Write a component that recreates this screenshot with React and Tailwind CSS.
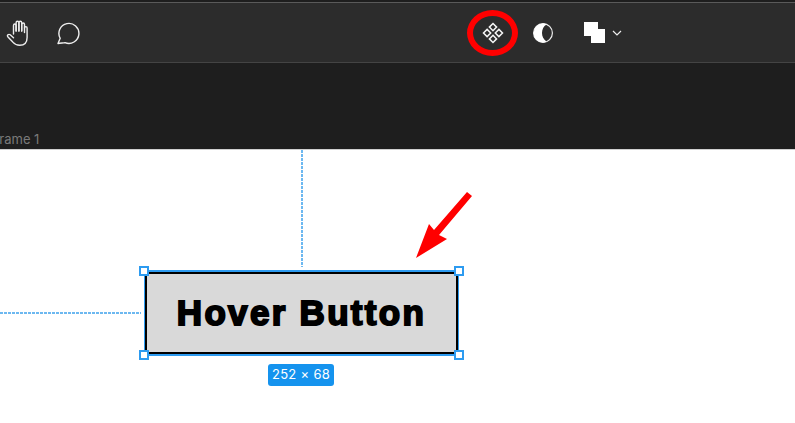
import React from 'react';

const HandIcon = () => (
  <svg width="26" height="28" viewBox="0 0 26 28" fill="none" stroke="#eeeeee" strokeWidth="1.4" strokeLinecap="round" strokeLinejoin="round">
    <path d="M7.5 15V6.5c0-2 2.6-2 2.6 0V12" />
    <path d="M10.1 12V3.8c0-2 2.8-2 2.8 0V12" />
    <path d="M12.9 12V3.8c0-2 2.8-2 2.8 0V12" />
    <path d="M15.7 12V5.5c0-2 2.8-2 2.8 0v8" />
    <path d="M18.5 9c0-1.8 2.6-1.8 2.6 0v9.5c0 5-3 7.8-7.5 7.8-3.2 0-5-1.2-6.8-3.2L2 18c-1.4-1.6.5-3.4 2.2-2.2l3.3 3" />
  </svg>
);

const CommentIcon = () => (
  <svg width="24" height="24" viewBox="0 0 24 24" fill="none" stroke="#eeeeee" strokeWidth="1.4" strokeLinejoin="round">
    <path d="M2 22.5l2.2-5.2A10 10 0 1 1 9 21.6c-1.8.3-4.500.5-7 .9z" />
  </svg>
);

const ComponentsIcon = () => (
  <svg width="22" height="22" viewBox="0 0 22 22" fill="none" stroke="#f4f4f4" strokeWidth="1.5">
    <path d="M11 1.500l3.600 3.600L11 8.700 7.400 5.100z" />
    <path d="M5.100 7.400l3.600 3.600-3.600 3.600L1.500 11z" />
    <path d="M16.900 7.400l3.600 3.600-3.600 3.600L13.300 11z" />
    <path d="M11 13.300l3.600 3.600L11 20.500l-3.600-3.600z" />
  </svg>
);

const ContrastIcon = () => (
  <svg width="22" height="22" viewBox="0 0 22 22">
    <circle cx="11" cy="11" r="9.400" fill="none" stroke="#eeeeee" strokeWidth="1.2" />
    <path d="M11 1.600a9.400 9.400 0 0 0 0 18.800c2 0 3-.6 3.500-1-3-1.800-4.500-5-4.500-8.400s1.500-6.600 4.500-8.400c-.5-.4-1.500-1-3.500-1z" fill="#ffffff" />
  </svg>
);

const Handle = ({ className }) => (
  <div className={`absolute w-[10px] h-[10px] bg-white border-2 border-[#2d9bf0] ${className}`} />
);

const App = () => {
  return (
    <div className="flex flex-col w-[795px] h-[423px] overflow-hidden bg-white font-['Liberation_Sans',Arial,sans-serif]">
      <div className="h-[2px] bg-[#1e1e1e]" />
      <header className="flex items-center h-[61px] bg-[#2c2c2c] border-t border-b border-t-[#5a5a5a] border-b-[#444444]">
        <div className="ml-[6px] flex items-center gap-[24px]">
          <HandIcon />
          <CommentIcon />
        </div>
        <div className="ml-[387px] relative flex items-center justify-center w-[51px] h-[46px]">
          <ComponentsIcon />
          <div className="absolute inset-0 rounded-[50%] border-[6px] border-[#ff0000]" />
        </div>
        <div className="ml-[14px]">
          <ContrastIcon />
        </div>
        <div className="ml-[30px] relative w-[21px] h-[21px]">
          <div className="absolute left-0 top-0 w-[14px] h-[14px] bg-white" />
          <div className="absolute left-[7px] top-[7px] w-[14px] h-[14px] bg-white" />
        </div>
        <svg className="ml-[7px]" width="10" height="6" viewBox="0 0 10 6" fill="none" stroke="#eeeeee" strokeWidth="1.200">
          <path d="M1 1l4 4 4-4" />
        </svg>
      </header>
      <div className="relative h-[86px] bg-[#1e1e1e]">
        <span className="absolute left-[-8px] bottom-0 text-[13px] text-[#7a7a7a] font-['Inter',sans-serif]">Frame 1</span>
      </div>
      <main className="relative flex-1 bg-white border-t border-t-[#d0d0d0]">
        <div className="absolute left-[301px] top-0 w-[2px] h-[117px] bg-[repeating-linear-gradient(to_bottom,#6db8f0_0,#6db8f0_3px,transparent_3px,transparent_4px)]" />
        <div className="absolute left-0 top-[162px] w-[141px] h-[2px] bg-[repeating-linear-gradient(to_right,#6db8f0_0,#6db8f0_3px,transparent_3px,transparent_4px)]" />

        <svg className="absolute left-[414px] top-[40px]" width="60" height="72" viewBox="0 0 60 72">
          <path d="M2 68L15 34L20 40L53 2L58 6L25 45L33 49z" fill="#ff0000" />
        </svg>

        <div className="absolute left-[144px] top-[120px] w-[315px] h-[86px] border-t-2 border-b-2 border-x border-[#2d9bf0]">
          <div className="flex items-center justify-center w-full h-full pt-[1px] bg-[#d9d9d9] border-2 border-black">
            <span className="text-[35px] font-bold text-black tracking-[2.3px] [-webkit-text-stroke:1.9px_black]">Hover Button</span>
          </div>
          <Handle className="left-[-6px] top-[-6px]" />
          <Handle className="right-[-6px] top-[-6px]" />
          <Handle className="left-[-6px] bottom-[-6px]" />
          <Handle className="right-[-6px] bottom-[-6px]" />
        </div>

        <div className="absolute left-[268px] top-[214px] flex items-center justify-center w-[66px] h-[22px] rounded-[3px] bg-[#1593ee] text-[13px] tracking-[0.3px] text-white font-['Inter',sans-serif]">
          252 × 68
        </div>
      </main>
    </div>
  );
};

export default App;
